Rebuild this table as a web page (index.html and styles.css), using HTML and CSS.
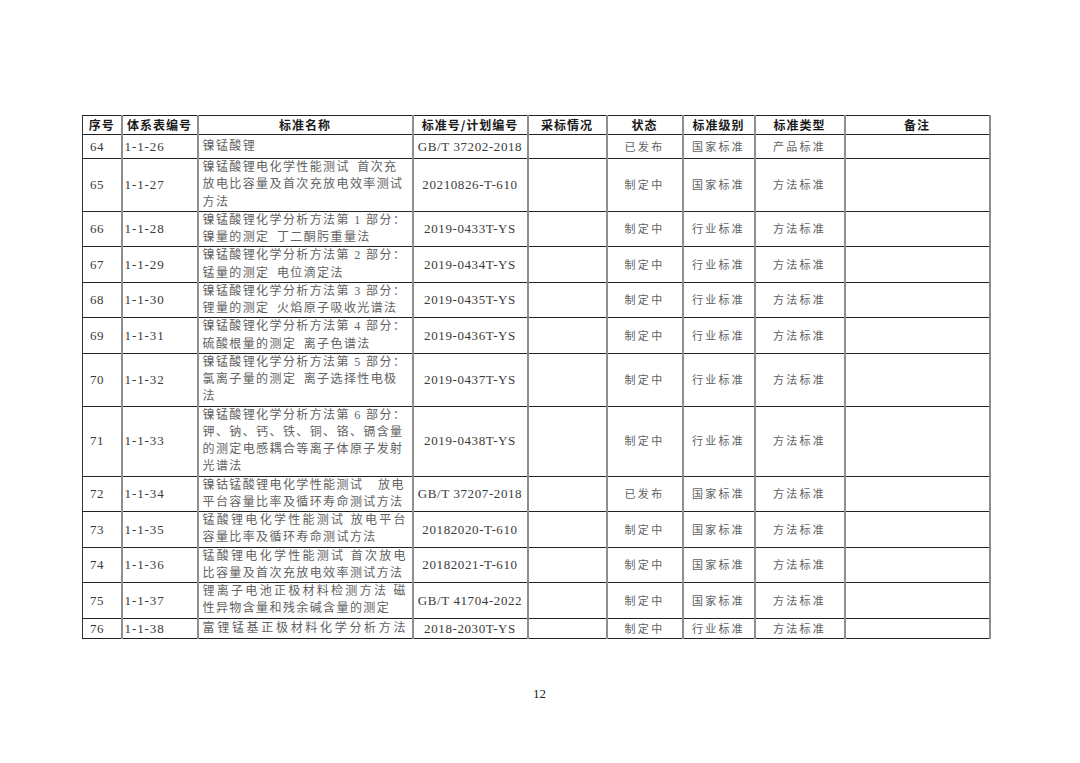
FILE: index.html
```html
<!DOCTYPE html>
<html lang="zh">
<head>
<meta charset="utf-8">
<title>标准体系表 12</title>
<link rel="stylesheet" href="styles.css">
</head>
<body>
<div class="page">
<table class="std">
<colgroup>
<col class="c1"><col class="c2"><col class="c3"><col class="c4"><col class="c5"><col class="c6"><col class="c7"><col class="c8"><col class="c9">
</colgroup>
<thead>
<tr class="hd">
<th>序号</th><th>体系表编号</th><th>标准名称</th><th>标准号/计划编号</th><th>采标情况</th><th>状态</th><th>标准级别</th><th>标准类型</th><th>备注</th>
</tr>
</thead>
<tbody>
<tr class="r64">
<td class="no">64</td><td class="code">1-1-26</td>
<td class="name"><span class="ln">镍锰酸锂</span></td>
<td class="sn">GB/T 37202-2018</td><td></td><td class="st">已发布</td><td class="st">国家标准</td><td class="st">产品标准</td><td></td>
</tr>
<tr>
<td class="no">65</td><td class="code">1-1-27</td>
<td class="name"><span class="ln">镍锰酸锂电化学性能测试&ensp;首次充</span><span class="ln">放电比容量及首次充放电效率测试</span><span class="ln">方法</span></td>
<td class="sn">20210826-T-610</td><td></td><td class="st">制定中</td><td class="st">国家标准</td><td class="st">方法标准</td><td></td>
</tr>
<tr>
<td class="no">66</td><td class="code">1-1-28</td>
<td class="name"><span class="ln">镍锰酸锂化学分析方法第 1 部分：</span><span class="ln">镍量的测定&ensp;丁二酮肟重量法</span></td>
<td class="sn">2019-0433T-YS</td><td></td><td class="st">制定中</td><td class="st">行业标准</td><td class="st">方法标准</td><td></td>
</tr>
<tr>
<td class="no">67</td><td class="code">1-1-29</td>
<td class="name"><span class="ln">镍锰酸锂化学分析方法第 2 部分：</span><span class="ln">锰量的测定&ensp;电位滴定法</span></td>
<td class="sn">2019-0434T-YS</td><td></td><td class="st">制定中</td><td class="st">行业标准</td><td class="st">方法标准</td><td></td>
</tr>
<tr>
<td class="no">68</td><td class="code">1-1-30</td>
<td class="name"><span class="ln">镍锰酸锂化学分析方法第 3 部分：</span><span class="ln">锂量的测定&ensp;火焰原子吸收光谱法</span></td>
<td class="sn">2019-0435T-YS</td><td></td><td class="st">制定中</td><td class="st">行业标准</td><td class="st">方法标准</td><td></td>
</tr>
<tr>
<td class="no">69</td><td class="code">1-1-31</td>
<td class="name"><span class="ln">镍锰酸锂化学分析方法第 4 部分：</span><span class="ln">硫酸根量的测定&ensp;离子色谱法</span></td>
<td class="sn">2019-0436T-YS</td><td></td><td class="st">制定中</td><td class="st">行业标准</td><td class="st">方法标准</td><td></td>
</tr>
<tr>
<td class="no">70</td><td class="code">1-1-32</td>
<td class="name"><span class="ln">镍锰酸锂化学分析方法第 5 部分：</span><span class="ln">氯离子量的测定&ensp;离子选择性电极</span><span class="ln">法</span></td>
<td class="sn">2019-0437T-YS</td><td></td><td class="st">制定中</td><td class="st">行业标准</td><td class="st">方法标准</td><td></td>
</tr>
<tr>
<td class="no">71</td><td class="code">1-1-33</td>
<td class="name"><span class="ln">镍锰酸锂化学分析方法第 6 部分：</span><span class="ln">钾、钠、钙、铁、铜、铬、镉含量</span><span class="ln">的测定电感耦合等离子体原子发射</span><span class="ln">光谱法</span></td>
<td class="sn">2019-0438T-YS</td><td></td><td class="st">制定中</td><td class="st">行业标准</td><td class="st">方法标准</td><td></td>
</tr>
<tr>
<td class="no">72</td><td class="code">1-1-34</td>
<td class="name"><span class="ln">镍钴锰酸锂电化学性能测试&ensp;&ensp;放电</span><span class="ln">平台容量比率及循环寿命测试方法</span></td>
<td class="sn">GB/T 37207-2018</td><td></td><td class="st">已发布</td><td class="st">国家标准</td><td class="st">方法标准</td><td></td>
</tr>
<tr>
<td class="no">73</td><td class="code">1-1-35</td>
<td class="name"><span class="ln jl">锰酸锂电化学性能测试 放电平台</span><span class="ln">容量比率及循环寿命测试方法</span></td>
<td class="sn">20182020-T-610</td><td></td><td class="st">制定中</td><td class="st">国家标准</td><td class="st">方法标准</td><td></td>
</tr>
<tr>
<td class="no">74</td><td class="code">1-1-36</td>
<td class="name"><span class="ln jl">锰酸锂电化学性能测试 首次放电</span><span class="ln">比容量及首次充放电效率测试方法</span></td>
<td class="sn">20182021-T-610</td><td></td><td class="st">制定中</td><td class="st">国家标准</td><td class="st">方法标准</td><td></td>
</tr>
<tr>
<td class="no">75</td><td class="code">1-1-37</td>
<td class="name"><span class="ln jl">锂离子电池正极材料检测方法 磁</span><span class="ln">性异物含量和残余碱含量的测定</span></td>
<td class="sn">GB/T 41704-2022</td><td></td><td class="st">制定中</td><td class="st">国家标准</td><td class="st">方法标准</td><td></td>
</tr>
<tr class="r76">
<td class="no">76</td><td class="code">1-1-38</td>
<td class="name"><span class="ln jl">富锂锰基正极材料化学分析方法</span></td>
<td class="sn">2018-2030T-YS</td><td></td><td class="st">制定中</td><td class="st">行业标准</td><td class="st">方法标准</td><td></td>
</tr>
</tbody>
</table>
<div class="pnum">12</div>
</div>
</body>
</html>
```
FILE: styles.css
```css
html, body {
  margin: 0;
  padding: 0;
  background: #ffffff;
}

.page {
  width: 1080px;
  height: 763px;
  padding: 115px 0 0 82px;
  box-sizing: border-box;
  font-family: "Liberation Serif", "Noto Sans CJK SC", serif;
  color: #333333;
}

.std {
  border-collapse: collapse;
  table-layout: fixed;
  width: 907px;
  border-top: 1px solid #222222;
  border-bottom: 1px solid #222222;
  border-left: 1px solid #333333;
  border-right: 2px solid #8a8a8a;
}

.c1 { width: 39px; }
.c2 { width: 76px; }
.c3 { width: 215px; }
.c4 { width: 115px; }
.c5 { width: 79px; }
.c6 { width: 76px; }
.c7 { width: 72px; }
.c8 { width: 90px; }
.c9 { width: 145px; }

.std th,
.std td {
  border-top: 1px solid #222222;
  border-bottom: 1px solid #222222;
  border-left: 2px solid #8e8e8e;
  border-right: 2px solid #8e8e8e;
  padding: 0;
  vertical-align: middle;
  line-height: 17.25px;
  white-space: nowrap;
  overflow: hidden;
}

.std th:first-child,
.std td:first-child {
  border-left: 1px solid #333333;
}

.hd th {
  height: 18px;
  line-height: 18px;
  font-family: "Noto Sans CJK SC", sans-serif;
  font-weight: 700;
  font-size: 12px;
  letter-spacing: 1px;
  color: #1a1a1a;
  text-align: center;
}

.r64 td {
  height: 23px;
}

.r76 td {
  height: 19px;
  line-height: 17px;
}

.no {
  font-size: 13px;
  letter-spacing: 0.6px;
  padding-left: 7px !important;
  text-align: left;
  color: #3a3a3a;
}

.code {
  font-size: 13px;
  letter-spacing: 0.9px;
  padding-left: 2px !important;
  text-align: left;
  color: #3a3a3a;
}

.name {
  font-size: 12px;
  letter-spacing: 1.4px;
  color: #626262;
  padding-left: 4px !important;
  padding-right: 6px !important;
}

.ln {
  display: block;
  text-align: left;
}

.ln.jl {
  text-align: justify;
  text-align-last: justify;
  letter-spacing: 0;
}

.sn {
  font-size: 13px;
  letter-spacing: 0.6px;
  text-align: center;
  color: #3a3a3a;
}

.st {
  font-family: "Noto Sans CJK SC", sans-serif;
  font-size: 11px;
  letter-spacing: 2.3px;
  text-align: center;
  color: #626262;
}

.pnum {
  width: 907px;
  margin-top: 47px;
  padding-left: 4px;
  text-align: center;
  font-family: "Liberation Serif", serif;
  font-size: 13px;
  line-height: 16px;
  color: #222222;
}
```
